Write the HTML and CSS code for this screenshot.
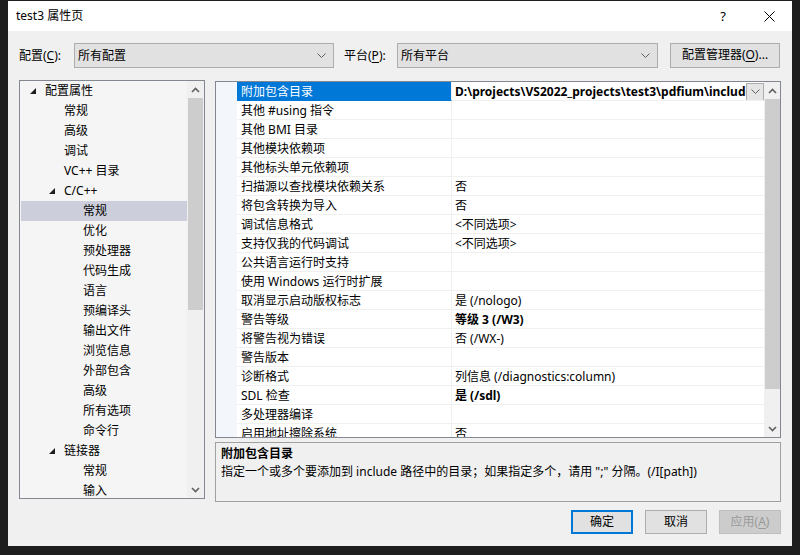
FILE: index.html
```html
<!DOCTYPE html>
<html lang="zh-CN">
<head>
    <meta charset="UTF-8">
    <title>test3 属性页</title>
    <link rel="stylesheet" href="styles.css">
</head>
<body>
    <div class="window">
        <div class="titlebar">
            <span class="title">test3 属性页</span>
            <span class="caption-btn help">?</span>
            <span class="caption-btn">
                <svg width="11" height="11" viewBox="0 0 11 11"><path d="M0.5 0.5 L10.5 10.5 M10.5 0.5 L0.5 10.5" stroke="#000" stroke-width="1"/></svg>
            </span>
        </div>

        <div class="toolbar">
            <span class="label label-config">配置(<u>C</u>):</span>
            <div class="combo combo-config">
                <span class="combo-text">所有配置</span>
                <svg class="chev" width="9" height="5" viewBox="0 0 9 5"><path d="M0.5 0.5 L4.5 4.5 L8.5 0.5" fill="none" stroke="#606060"/></svg>
            </div>
            <span class="label label-platform">平台(<u>P</u>):</span>
            <div class="combo combo-platform">
                <span class="combo-text">所有平台</span>
                <svg class="chev" width="9" height="5" viewBox="0 0 9 5"><path d="M0.5 0.5 L4.5 4.5 L8.5 0.5" fill="none" stroke="#606060"/></svg>
            </div>
            <button class="btn btn-manager">配置管理器(<u>O</u>)...</button>
        </div>

        <div class="main">
            <div class="tree">
                <div class="tree-items">
                    <div class="tree-row lvl0"><span class="exp"><svg width="6" height="6" viewBox="0 0 6 6"><polygon points="6,0 6,6 0,6" fill="#1e1e1e"/></svg></span>配置属性</div>
                    <div class="tree-row lvl1"><span class="exp"></span>常规</div>
                    <div class="tree-row lvl1"><span class="exp"></span>高级</div>
                    <div class="tree-row lvl1"><span class="exp"></span>调试</div>
                    <div class="tree-row lvl1"><span class="exp"></span>VC++ 目录</div>
                    <div class="tree-row lvl1"><span class="exp"><svg width="6" height="6" viewBox="0 0 6 6"><polygon points="6,0 6,6 0,6" fill="#1e1e1e"/></svg></span>C/C++</div>
                    <div class="tree-row lvl2 selected"><span class="exp"></span>常规</div>
                    <div class="tree-row lvl2"><span class="exp"></span>优化</div>
                    <div class="tree-row lvl2"><span class="exp"></span>预处理器</div>
                    <div class="tree-row lvl2"><span class="exp"></span>代码生成</div>
                    <div class="tree-row lvl2"><span class="exp"></span>语言</div>
                    <div class="tree-row lvl2"><span class="exp"></span>预编译头</div>
                    <div class="tree-row lvl2"><span class="exp"></span>输出文件</div>
                    <div class="tree-row lvl2"><span class="exp"></span>浏览信息</div>
                    <div class="tree-row lvl2"><span class="exp"></span>外部包含</div>
                    <div class="tree-row lvl2"><span class="exp"></span>高级</div>
                    <div class="tree-row lvl2"><span class="exp"></span>所有选项</div>
                    <div class="tree-row lvl2"><span class="exp"></span>命令行</div>
                    <div class="tree-row lvl1"><span class="exp"><svg width="6" height="6" viewBox="0 0 6 6"><polygon points="6,0 6,6 0,6" fill="#1e1e1e"/></svg></span>链接器</div>
                    <div class="tree-row lvl2"><span class="exp"></span>常规</div>
                    <div class="tree-row lvl2"><span class="exp"></span>输入</div>
                </div>
                <div class="scrollbar">
                    <div class="sb-btn"><svg width="9" height="6" viewBox="0 0 9 6"><path d="M1 5 L4.5 1.5 L8 5" fill="none" stroke="#606060" stroke-width="1.6"/></svg></div>
                    <div class="sb-thumb tree-thumb"></div>
                    <div class="sb-track"></div>
                    <div class="sb-btn"><svg width="9" height="6" viewBox="0 0 9 6"><path d="M1 1 L4.5 4.5 L8 1" fill="none" stroke="#606060" stroke-width="1.6"/></svg></div>
                </div>
            </div>

            <div class="right">
                <div class="grid">
                    <div class="grid-rows">
                        <div class="prop"><span class="gutter"></span><span class="name selected">附加包含目录</span><span class="value bold"><span class="value-text">D:\projects\VS2022_projects\test3\pdfium\include</span><span class="drop"><svg width="9" height="5" viewBox="0 0 9 5"><path d="M0.5 0.5 L4.5 4.5 L8.5 0.5" fill="none" stroke="#606060"/></svg></span></span></div>
                        <div class="prop"><span class="gutter"></span><span class="name">其他 #using 指令</span><span class="value"></span></div>
                        <div class="prop"><span class="gutter"></span><span class="name">其他 BMI 目录</span><span class="value"></span></div>
                        <div class="prop"><span class="gutter"></span><span class="name">其他模块依赖项</span><span class="value"></span></div>
                        <div class="prop"><span class="gutter"></span><span class="name">其他标头单元依赖项</span><span class="value"></span></div>
                        <div class="prop"><span class="gutter"></span><span class="name">扫描源以查找模块依赖关系</span><span class="value">否</span></div>
                        <div class="prop"><span class="gutter"></span><span class="name">将包含转换为导入</span><span class="value">否</span></div>
                        <div class="prop"><span class="gutter"></span><span class="name">调试信息格式</span><span class="value">&lt;不同选项&gt;</span></div>
                        <div class="prop"><span class="gutter"></span><span class="name">支持仅我的代码调试</span><span class="value">&lt;不同选项&gt;</span></div>
                        <div class="prop"><span class="gutter"></span><span class="name">公共语言运行时支持</span><span class="value"></span></div>
                        <div class="prop"><span class="gutter"></span><span class="name">使用 Windows 运行时扩展</span><span class="value"></span></div>
                        <div class="prop"><span class="gutter"></span><span class="name">取消显示启动版权标志</span><span class="value">是 (/nologo)</span></div>
                        <div class="prop"><span class="gutter"></span><span class="name">警告等级</span><span class="value bold">等级 3 (/W3)</span></div>
                        <div class="prop"><span class="gutter"></span><span class="name">将警告视为错误</span><span class="value">否 (/WX-)</span></div>
                        <div class="prop"><span class="gutter"></span><span class="name">警告版本</span><span class="value"></span></div>
                        <div class="prop"><span class="gutter"></span><span class="name">诊断格式</span><span class="value">列信息 (/diagnostics:column)</span></div>
                        <div class="prop"><span class="gutter"></span><span class="name">SDL 检查</span><span class="value bold">是 (/sdl)</span></div>
                        <div class="prop"><span class="gutter"></span><span class="name">多处理器编译</span><span class="value"></span></div>
                        <div class="prop"><span class="gutter"></span><span class="name">启用地址擦除系统</span><span class="value">否</span></div>
                    </div>
                    <div class="scrollbar">
                        <div class="sb-btn"><svg width="9" height="6" viewBox="0 0 9 6"><path d="M1 5 L4.5 1.5 L8 5" fill="none" stroke="#606060" stroke-width="1.6"/></svg></div>
                        <div class="sb-thumb grid-thumb"></div>
                        <div class="sb-track"></div>
                        <div class="sb-btn"><svg width="9" height="6" viewBox="0 0 9 6"><path d="M1 1 L4.5 4.5 L8 1" fill="none" stroke="#606060" stroke-width="1.6"/></svg></div>
                    </div>
                </div>

                <div class="desc">
                    <div class="desc-title">附加包含目录</div>
                    <div class="desc-text">指定一个或多个要添加到 include 路径中的目录；如果指定多个，请用 ";" 分隔。(/I[path])</div>
                </div>
            </div>
        </div>

        <div class="footer">
            <button class="btn btn-default">确定</button>
            <button class="btn">取消</button>
            <button class="btn btn-disabled">应用(<u>A</u>)</button>
        </div>
    </div>
</body>
</html>
```

FILE: styles.css
```css
* {
    box-sizing: border-box;
}

body {
    margin: 0;
    background-color: #1e1e1e;
    font-family: "Noto Sans", "Noto Sans CJK SC", sans-serif;
    font-size: 12px;
    color: #000;
    overflow: hidden;
}

u {
    text-decoration-thickness: 1px;
    text-underline-offset: 2px;
}

.window {
    margin: 1px 0 0 8px;
    width: 784px;
    height: 545px;
    background-color: #f0f0f0;
    display: flex;
    flex-direction: column;
}

/* title bar */
.titlebar {
    height: 30px;
    background-color: #fff;
    display: flex;
    align-items: center;
    padding-left: 8px;
}

.title {
    flex: 1;
    line-height: 16px;
}

.caption-btn {
    width: 46px;
    height: 30px;
    display: flex;
    align-items: center;
    justify-content: center;
}

.help {
    font-size: 13px;
}

/* config row */
.toolbar {
    display: flex;
    align-items: center;
    padding: 12px 11px 0 11px;
}

.label {
    line-height: 16px;
}

.label-config {
    width: 55px;
}

.label-platform {
    width: 53px;
    margin-left: 10px;
}

.combo {
    height: 25px;
    border: 1px solid #adadad;
    background-color: #e1e1e1;
    display: flex;
    align-items: center;
    padding: 0 7px 0 3px;
}

.combo-config {
    width: 260px;
}

.combo-platform {
    width: 261px;
}

.combo-text {
    flex: 1;
    line-height: 16px;
}

.btn {
    font-family: inherit;
    font-size: 12px;
    color: #000;
    height: 24px;
    width: 62px;
    padding: 0;
    border: 1px solid #adadad;
    background-color: #e1e1e1;
    line-height: 16px;
}

.btn-manager {
    width: 110px;
    height: 25px;
    margin-left: 12px;
    margin-top: -1px;
}

.btn-default {
    border: 2px solid #0078d7;
}

.btn-disabled {
    background-color: #cccccc;
    border-color: #bfbfbf;
    color: #9a9a9a;
}

/* main area */
.main {
    display: flex;
    align-items: flex-start;
    gap: 10px;
    padding: 12px 11px 0 11px;
}

.tree {
    width: 186px;
    height: 419px;
    border: 1px solid #828790;
    background-color: #f5f5f5;
    display: flex;
}

.tree-items {
    flex: 1;
    overflow: hidden;
}

.tree-row {
    height: 20px;
    display: flex;
    align-items: center;
    white-space: nowrap;
    line-height: 16px;
}

.tree-row.lvl0 { padding-left: 10px; }
.tree-row.lvl1 { padding-left: 29px; }
.tree-row.lvl2 { padding-left: 48px; }

.tree-row.selected {
    background-color: #cccedb;
    margin-left: 1px;
    padding-left: 47px;
}

.exp {
    width: 15px;
    height: 20px;
    display: flex;
    align-items: center;
    padding-bottom: 1px;
}

/* scrollbars */
.scrollbar {
    width: 17px;
    background-color: #f0f0f0;
    display: flex;
    flex-direction: column;
}

.grid .scrollbar {
    width: 16px;
}

.sb-btn {
    height: 17px;
    display: flex;
    align-items: center;
    justify-content: center;
}

.sb-thumb {
    background-color: #cdcdcd;
    margin: 0 1px;
}

.tree-thumb {
    height: 212px;
}

.grid-thumb {
    height: 290px;
    margin: 0 0 0 1px;
}

.sb-track {
    flex: 1;
}

/* property grid */
.right {
    width: 566px;
    display: flex;
    flex-direction: column;
}

.grid {
    margin-top: 1px;
    height: 357px;
    border: 1px solid #828790;
    background-color: #fff;
    display: flex;
}

.grid-rows {
    flex: 1;
    overflow: hidden;
}

.prop {
    height: 19px;
    display: flex;
}

.gutter {
    width: 21px;
    background-color: #f3f6fb;
}

.name,
.value {
    height: 19px;
    padding-top: 2px;
    border-bottom: 1px solid #f0f0f0;
    display: flex;
    align-items: center;
    white-space: nowrap;
    overflow: hidden;
    line-height: 16px;
}

.name {
    width: 215px;
    padding-left: 4px;
    border-right: 1px solid #f0f0f0;
}

.name.selected {
    background-color: #0078d7;
    border-bottom-color: #0078d7;
    color: #fff;
}

.value {
    flex: 1;
    padding-left: 3px;
}

.bold {
    font-weight: 700;
}

.value-text {
    flex: 1;
    overflow: hidden;
}

.drop {
    width: 18px;
    height: 18px;
    margin-top: -1px;
    border: 1px solid #adadad;
    background-color: #e5e5e5;
    display: flex;
    align-items: center;
    justify-content: center;
}

/* description */
.desc {
    margin-top: 4px;
    height: 60px;
    border: 1px solid #a0a0a0;
    padding: 2px 5px 0;
}

.desc-title {
    font-weight: 700;
    line-height: 18px;
}

.desc-text {
    line-height: 18px;
    white-space: nowrap;
}

/* buttons */
.footer {
    display: flex;
    justify-content: flex-end;
    gap: 12px;
    padding: 8px 11px 0 0;
}
```
